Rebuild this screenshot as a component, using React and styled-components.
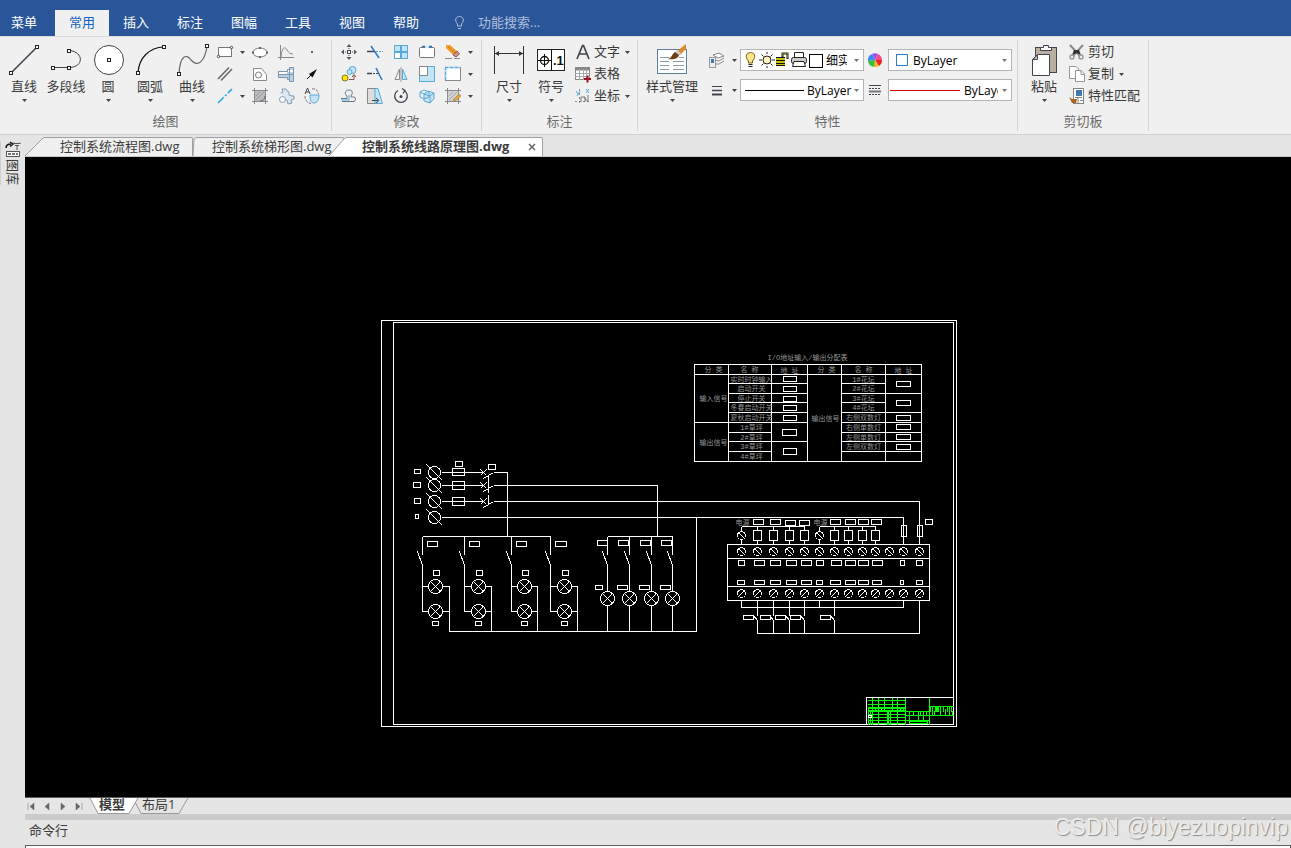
import React from "react";
import styled, { createGlobalStyle } from "styled-components";

const GlobalStyle = createGlobalStyle`
  * { box-sizing: border-box; }
  body {
    margin: 0;
    background: #e5e5e5;
    font-family: "Open Sans", "Noto Sans CJK SC", sans-serif;
    font-size: 13px;
    color: #3b3b3b;
  }
  button, input, select { font: inherit; color: inherit; }
`;

const Shell = styled.div`
  display: flex;
  flex-direction: column;
  height: 100vh;
  overflow: hidden;
  position: relative;
`;

const PlainButton = styled.button`
  border: 0;
  padding: 0;
  margin: 0;
  background: none;
  cursor: pointer;
`;

const Spacer = styled.span`
  flex: none;
  width: ${(p) => p.$w}px;
`;

/* ---------- menu ---------- */

const MenuBar = styled.nav`
  display: flex;
  align-items: flex-end;
  flex: none;
  height: 36px;
  background: #2a5699;
`;

const MenuTab = styled(PlainButton)`
  width: ${(p) => (p.$first ? 48 : 54)}px;
  margin-right: ${(p) => (p.$first ? 7 : 0)}px;
  height: 26px;
  line-height: 20px;
  padding-bottom: 3px;
  color: ${(p) => (p.$active ? "#0f62c4" : "#fff")};
  background: ${(p) => (p.$active ? "#f0f0f0" : "transparent")};
`;

const SearchBox = styled.label`
  display: flex;
  align-items: center;
  height: 26px;
  margin-left: 19px;
  padding-bottom: 3px;
  gap: 10px;
`;

const SearchInput = styled.input`
  width: 120px;
  height: 22px;
  padding: 0;
  border: 0;
  background: none;
  color: #fff;
  &::placeholder { color: #aebfdb; opacity: 1; }
`;

/* ---------- ribbon ---------- */

const Ribbon = styled.div`
  display: flex;
  flex: none;
  height: 99px;
  padding: 3px 0;
  background: #f0f0f0;
  border-top: 1px solid #dadada;
  border-bottom: 1px solid #d0d0d0;
`;

const Group = styled.section`
  display: flex;
  flex-direction: column;
  border-right: 1px solid #d4d4d4;
`;

const GroupBody = styled.div`
  display: flex;
  height: 71px;
  padding: 0 ${(p) => p.$right}px 0 ${(p) => p.$left}px;
`;

const GroupLabel = styled.div`
  text-align: center;
  line-height: 20px;
  color: #6a6a6a;
`;

const BigButton = styled(PlainButton)`
  display: flex;
  flex-direction: column;
  align-items: center;
  width: ${(p) => p.$width || 42}px;
  height: 68px;
  padding-top: 4px;
  line-height: 20px;
  white-space: nowrap;
`;

const BigArrow = styled.span`
  display: block;
  padding-top: 3px;
`;

const ToolColumns = styled.div`
  display: flex;
  padding-top: 1px;
`;

const ToolColumn = styled.div`
  display: flex;
  flex-direction: column;
  width: ${(p) => p.$width || 26}px;
`;

const Tool = styled(PlainButton)`
  display: flex;
  align-items: center;
  gap: 7px;
  height: 22px;
  white-space: nowrap;
`;

const LabelTool = styled(Tool)`
  gap: 3px;
  line-height: 20px;
  & > span { padding-bottom: 2px; }
  & > svg:last-child:not(:first-child) { margin-left: 2px; }
`;

const PropertyRows = styled.div`
  display: flex;
  flex-direction: column;
  gap: 8px;
  padding-top: 9px;
`;

const PropertyRow = styled.div`
  display: flex;
  align-items: center;
`;

const PropertyButton = styled(PlainButton)`
  display: flex;
  align-items: center;
  justify-content: space-between;
  width: ${(p) => p.$width}px;
  padding-right: ${(p) => p.$right}px;
`;

const Combo = styled.label`
  display: flex;
  align-items: center;
  width: 124px;
  height: 22px;
  padding: 0 4px;
  background: #fff;
  border: 1px solid #b4b4b4;
`;

const ComboSelect = styled.select`
  appearance: none;
  flex: 1;
  min-width: 0;
  height: 20px;
  margin-left: ${(p) => p.$gap}px;
  margin-right: ${(p) => p.$end || 0}px;
  padding: 0;
  border: 0;
  border-radius: 0;
  background: none;
  color: #000;
  font-size: 12px;
  text-overflow: clip;
`;

/* ---------- workspace ---------- */

const Workspace = styled.div`
  display: flex;
  flex: 1;
  min-height: 0;
`;

const SideBar = styled.aside`
  flex: none;
  width: 25px;
  padding-top: 6px;
  background: #e5e5e5;
`;

const LibraryTab = styled(PlainButton)`
  display: flex;
  flex-direction: column;
  align-items: center;
  width: 24px;
  height: 44px;
  border-left: 1px solid #cfcfcf;
`;

const VerticalText = styled.span`
  writing-mode: vertical-rl;
  text-orientation: sideways;
  line-height: 20px;
`;

const Main = styled.main`
  display: flex;
  flex-direction: column;
  flex: 1;
  min-width: 0;
`;

const DocTabs = styled.div`
  display: flex;
  align-items: flex-end;
  flex: none;
  height: 22px;
  border-bottom: 1px solid #c9c9c9;
`;

const DocTabBox = styled.div`
  display: flex;
  height: 19px;
  position: relative;
  margin-left: ${(p) => p.$overlap}px;
  font-weight: ${(p) => (p.$active ? 700 : 400)};
`;

const DocTabBody = styled.div`
  display: flex;
  align-items: center;
  width: ${(p) => p.$width}px;
  padding-left: 15px;
  border-top: 1px solid #a0a0a0;
  border-right: 1px solid #a0a0a0;
  border-top-right-radius: 2px;
  background: ${(p) => (p.$active ? "#fff" : "#f0f0f0")};
  white-space: nowrap;
`;

const DocTabTitle = styled(PlainButton)`
  font-weight: inherit;
  line-height: 16px;
  padding-bottom: 2px;
`;

const CloseButton = styled(PlainButton)`
  display: flex;
  margin: 0 6px 0 auto;
`;

const Canvas = styled.div`
  flex: 1;
  min-height: 0;
  background: #000;
  & > svg { display: block; width: 100%; height: 100%; }
`;

const SheetBar = styled.div`
  display: flex;
  flex: none;
  height: 17px;
  border-top: 1px solid #5a5a5a;
`;

const SheetNav = styled.div`
  display: flex;
  align-items: center;
  gap: 4px;
  width: 65px;
`;

const SheetNavButton = styled(PlainButton)`
  display: flex;
  justify-content: center;
  width: 12px;
`;

const SheetTab = styled(PlainButton)`
  display: flex;
  height: 16px;
  position: relative;
  z-index: ${(p) => (p.$active ? 1 : 0)};
  margin-left: ${(p) => (p.$active ? 0 : -5)}px;
  font-weight: ${(p) => (p.$active ? 700 : 400)};
`;

const SheetTabText = styled.span`
  padding: 0 3px 0 1px;
  line-height: 12px;
  height: 16px;
  border-bottom: 1px solid #9a9a9a;
  background: ${(p) => (p.$active ? "#fff" : "#e5e5e5")};
`;

const Splitter = styled.div`
  flex: none;
  height: 6px;
  background: #cbcbcb;
`;

const CommandPanel = styled.div`
  flex: none;
  height: 28px;
  overflow: hidden;
`;

const CommandLabel = styled.label`
  display: block;
  height: 25px;
  line-height: 20px;
  padding-left: 4px;
`;

const CommandInput = styled.input`
  display: block;
  width: 100%;
  height: 22px;
  border: 1px solid #5f5f5f;
  background: #fff;
`;

const Watermark = styled.div`
  position: absolute;
  right: 3px;
  bottom: 7px;
  font-family: "Liberation Sans", sans-serif;
  font-size: 23px;
  line-height: 28px;
  color: #ececec;
  text-shadow: 1px 1px 1px #8c8c8c;
  pointer-events: none;
`;

/* ---------- icons ---------- */

const Glyph = styled.svg`
  display: block;
  flex: none;
  width: ${(p) => p.$w}px;
  height: ${(p) => p.$h || p.$w}px;
  overflow: visible;
`;

const Icon = ({ w = 16, h = w, children, ...rest }) => (
  <Glyph $w={w} $h={h} viewBox={`0 0 ${w} ${h}`} fill="none" stroke="#40444e" aria-hidden="true" {...rest}>
    {children}
  </Glyph>
);

const Arrow = ({ color = "#444" }) => (
  <Icon w={5} h={3}><path d="M0 0H5L2.5 3Z" fill={color} stroke="none" /></Icon>
);

const Knob = ({ x, y }) => <rect x={x - 1.5} y={y - 1.5} width="3" height="3" fill="#fff" stroke="#222" />;

const big = {
  line: <Icon w={32}><path d="M3.5 28.5L29.5 2.5" strokeWidth="1.6" /><Knob x={3} y={29} /><Knob x={29} y={3} /></Icon>,
  polyline: <Icon w={32}><path d="M3.5 23.5H19.5C34 23 34 8 19.5 6.5" /><Knob x={3} y={24} /><Knob x={19} y={24} /><Knob x={19} y={7} /></Icon>,
  circle: <Icon w={32}><circle cx="17" cy="16" r="14.5" fill="#fff" /><Knob x={17} y={16} /></Icon>,
  arc: <Icon w={32}><path d="M4 28.5C5 14 15 3.5 30 3" stroke="#111" strokeWidth="1.2" /><Knob x={4} y={29} /><Knob x={30} y={3} /></Icon>,
  curve: <Icon w={32}><path d="M3 30C4 10 11 10 15 16C22 24 29 17 31 2" stroke="#666" strokeWidth="1.2" /><Knob x={3} y={30} /><Knob x={31} y={2} /></Icon>,
  dimension: <Icon w={32}><path d="M1.5 2V30M30.5 2V30M2 9.5H30" stroke="#333" /><path d="M2 9.5L6 7V12ZM30 9.5L26 7V12Z" fill="#333" stroke="none" /></Icon>,
  symbol: (
    <Icon w={32}>
      <rect x="2.5" y="5.500" width="27" height="21" fill="#fff" stroke="#222" />
      <path d="M16.5 5V27M3 16.5H16M9.5 10V23" stroke="#111" /><circle cx="9.5" cy="16.5" r="4" stroke="#111" strokeWidth="1.3" />
      <text x="18" y="21" fontSize="13" fontWeight="700" fontFamily="Liberation Sans, sans-serif" fill="#111" stroke="none">.1</text>
    </Icon>
  ),
  style: (
    <Icon w={32}>
      <rect x="1.5" y="5.5" width="29" height="24" fill="#fff" stroke="#5e7d9e" />
      <path d="M4 13.5H13M4 17.5H13M4 21.5H13M4 25.5H13M17 17.5H28M17 21.5H28M17 25.5H28M23 13.5H28" stroke="#8d99aa" />
      <path d="M30 0V5L24 11L20 8Z" fill="#d98a2b" stroke="none" />
      <path d="M22 6L25 10L22 12L18 9Z" fill="#c9ccd1" stroke="none" />
      <path d="M19 8L23 11C22 15 17 16 12 15C16 14 16 10 19 8Z" fill="#6d3f17" stroke="none" />
    </Icon>
  ),
  paste: (
    <Icon w={32}>
      <rect x="7.5" y="3.5" width="21" height="25" fill="#b8aea2" />
      <path d="M12.5 6.5V3.5H15.5V1.5H20.5V3.5H23.5V6.5Z" fill="#fff" />
      <path d="M9.5 10.5H21.5V31.5H4.5V15.5Z" fill="#fff" /><path d="M9.5 11V15.5H5Z" fill="#ccccdd" />
    </Icon>
  ),
};

const blue = "#5aa9d6";
const pale = "#c2e4f6";

const tool = {
  rect: <Icon><rect x="1.5" y="3.5" width="13" height="9" fill="#fff" stroke="#777" /><circle cx="1.5" cy="12.500" r="1.2" fill="#fff" /><circle cx="14.5" cy="3.500" r="1.2" fill="#fff" /></Icon>,
  parallel: <Icon><path d="M1 13L12 1.5M4 14.5L15 3" strokeWidth="1.500" stroke="#666" /></Icon>,
  centerline: <Icon><path d="M1 15L15 1" stroke="#1ba9e4" strokeWidth="1.500" strokeDasharray="8 2 2 2" /></Icon>,
  ellipse: <Icon><ellipse cx="8" cy="8.5" rx="7" ry="4.500" fill="#fff" stroke="#777" /><path d="M7 4H9M7 13H9M1 7.500V9.500M15 7.500V9.500" strokeWidth="2" stroke="#666" /></Icon>,
  profile: <Icon><path d="M1.5 2.500H9.500L14.500 8.500V14.500H1.500Z" fill="#fff" stroke="#888" /><circle cx="6.500" cy="9" r="3" stroke="#777" /></Icon>,
  hatch: <Icon><rect x="3" y="3" width="10" height="10" fill="#b9bcc0" stroke="none" /><path d="M0 2.500H16M0 13.500H16M2.500 0V16M13.500 0V16" stroke="#888" /><path d="M13 8C13 11 11 13 8 13" stroke="#666" /><path d="M4 8L8 4M4 12L12 4" stroke="#999" /></Icon>,
  formula: <Icon><path d="M2.500 1V16M0 13.500H16" stroke="#888" /><path d="M3 13C4 3 7 2 9 6C11 9 12 10 15 10" stroke="#888" /></Icon>,
  bolt: <Icon><path d="M.5 5.500H9.500V3.500H11.500V1.500H15.500V15.500H11.500V13.500H9.500V11.500H.500Z" fill="#b9d2e8" stroke="#7f93aa" /><path d="M1 7H9M10 5H15" stroke="#fff" strokeWidth="2" /><path d="M1 8.500H15M11.500 3V13" stroke="#7f93aa" /></Icon>,
  gear: <Icon><path d="M2.500 5L5 4L4 1H8L9 3L11 4L11 7L14 8H16V11L13 12L14 15L10 16L9 12L7 11" fill="#d9e8f4" stroke="#8799ad" /><circle cx="4.500" cy="11.500" r="3" fill="#fff" stroke="#8799ad" /></Icon>,
  dot: <Icon><rect x="7" y="7" width="2" height="2" fill="#5c6470" stroke="none" /></Icon>,
  leader: <Icon><path d="M3 13L8 8" stroke="#111" /><path d="M13 3L5 8L8.500 11.500Z" fill="#111" stroke="none" /></Icon>,
  rotateA: <Icon><path d="M6 7H15C15 12 13 15 10 15C7 15 6 12 6 7Z" fill={pale} stroke={blue} /><path d="M1 6L3.500 0L6 6M2 4H5" /><path d="M8 1C12 0 14 3 14.500 6M1 8C1 12 3 15 7 15.500" stroke="#777" strokeDasharray="3 1" /></Icon>,
  move: <Icon><rect x="6.500" y="6.500" width="3" height="3" fill="#fff" /><path d="M8 5V2M8 11V14M5 8H2M11 8H14" strokeDasharray="1 1" /><path d="M8 0L10.500 3H5.500ZM8 16L10.500 13H5.500ZM0 8L3 5.500V10.500ZM16 8L13 5.500V10.500Z" fill="#50545e" stroke="none" /></Icon>,
  trim: <Icon><path d="M0 7.500H8" strokeWidth="1.500" /><path d="M9 7.500H16" stroke={blue} strokeDasharray="2 1" /><path d="M4 2L12 14" stroke="#2a7ac0" strokeWidth="1.500" /></Icon>,
  extend: <Icon><path d="M0 7.500H5" strokeWidth="1.500" /><path d="M6 7.500H12" strokeDasharray="2 1" /><path d="M9 2L15 14" stroke="#2a7ac0" strokeWidth="1.500" /></Icon>,
  array: <Icon><rect x="1.500" y="1.500" width="13" height="13" fill={pale} stroke={blue} /><rect x="2" y="8" width="6" height="6" fill="#fff" stroke="none" /><path d="M8 1V15M1 8H15" stroke={blue} strokeWidth="2" /></Icon>,
  stretch: <Icon><rect x=".500" y="3.500" width="15" height="10" rx="1" fill="#fff" stroke="#777" /><path d="M5 3.500H11" stroke="#f0f0f0" strokeWidth="2" /><path d="M3 2.500H5.500V4M10.500 4V2.500H13" stroke="#2a7ac0" strokeWidth="1.500" /></Icon>,
  erase: <Icon><path d="M1 1L5 1L12 7L8 11L1 4Z" fill="#efa028" stroke="none" /><path d="M3 3L10 9" stroke="#c4781a" /><path d="M12 7L14.500 10L11 13L8 11Z" fill="#cf9389" stroke="#8d5950" /><path d="M0 14.500H7M9 14.500H15" stroke="#888" /></Icon>,
  copy: <Icon><circle cx="4" cy="12" r="3" fill="#ffe600" stroke="#80751d" /><circle cx="11.500" cy="4" r="3.500" fill={pale} stroke={blue} /><circle cx="8.500" cy="6" r="2.500" fill={pale} stroke={blue} /><path d="M8 13.500H13V9M11 11L13 8.500L15 11" stroke="#8a4e4e" /></Icon>,
  mirror: <Icon><path d="M6.500 3V13.500H2Z" stroke="#888" fill="#f6f6f6" /><path d="M9.500 3V13.500H14Z" fill={pale} stroke={blue} /><path d="M8 1V16" stroke="#999" /></Icon>,
  scale: <Icon><rect x=".500" y=".500" width="15" height="15" fill={pale} stroke={blue} /><rect x=".500" y=".500" width="8" height="9" fill="#fff" stroke="#888" /></Icon>,
  boundary: <Icon><rect x=".500" y="1.500" width="15" height="13" fill="#fff" stroke="#888" /><path d="M0 1.500H15M.500 1V14" stroke="#a8d6f2" strokeWidth="2" /><path d="M0 1.500H15M.500 1V14" stroke={blue} strokeDasharray="3 2" /></Icon>,
  offset: <Icon><path d="M0 10.500H6V8C3 6 4 2 8 2S12 5 10 8V9H13C15 9 15 13 13 13.500H1" stroke="#6b7684" /><path d="M0 12H8V7" stroke={blue} /></Icon>,
  taper: <Icon><path d="M.500.500H9V15.500H.500Z" fill="#ddd" stroke="#888" /><path d="M8 .500H11L15.500 15.500H8Z" fill={pale} stroke={blue} /><path d="M5 12.500H11M9 10L12 12.500L9 15" /></Icon>,
  rotate: <Icon><path d="M5 2.500A6.300 6.300 0 1 0 11 2.500" strokeWidth="1.300" /><path d="M9 .500L12 2.500L10 5.500" strokeWidth="1.300" /><circle cx="8" cy="8.500" r="1.500" fill="#40444e" stroke="none" /></Icon>,
  block: <Icon><path d="M5 6L9 3L15 5V11L11 15L5 13Z" fill={pale} stroke={blue} /><path d="M5 6L11 8L15 5M11 8V15M1 4L5 2L10 4V9L5 11L1 9ZM1 4L5 6" stroke={blue} /></Icon>,
  editHatch: <Icon><rect x="2" y="2" width="12" height="12" fill="#cfd0d2" stroke="none" /><path d="M0 2.500H16M0 13.500H16M2.500 0V16M13.500 0V16" stroke="#888" /><path d="M4 8L8 4M4 12L12 4" stroke="#aaa" /><path d="M8 12L14 6L16 8L10 13Z" fill="#e9aa3d" stroke="#9a661b" strokeWidth=".500" /></Icon>,
  text: <Icon w={16}><path d="M2 15L7.500 1.500H8.500L14 15M4.500 10H11.500" strokeWidth="1.700" /></Icon>,
  table: <Icon><rect x=".500" y="1.500" width="14" height="12" fill="#fff" stroke="#888" /><path d="M0 3H15" stroke="#888" strokeWidth="3" /><path d="M0 7.500H15M0 10.500H15M4.500 3V14M8.500 3V14M11.500 3V14" stroke="#aaa" /><path d="M9 13H16M12.500 9.500V16.500" stroke="#a40f1c" strokeWidth="2" /></Icon>,
  coord: <Icon><path d="M4.500 1V16M0 13.500H16" stroke="#888" strokeDasharray="2 2" /><path d="M6 14V9H10V14M9 9L13 14V7" stroke="#777" /><path d="M1 3L3 6M5 3L2 8M11 1L14 5M14 1L11 5" stroke={blue} /></Icon>,
  cut: <Icon><path d="M1 1L11 12M14 1L4 12" strokeWidth="2" stroke="#888" /><path d="M5 6H10L12 11L8 9L3 11Z" fill="#333" stroke="none" /><circle cx="3" cy="13" r="2" stroke="#999" strokeWidth="1.500" /><circle cx="12" cy="13" r="2" stroke="#999" strokeWidth="1.500" /></Icon>,
  duplicate: <Icon><path d="M.500.500H7L9.500 3V12.500H.500Z" fill="#fff" stroke="#959595" /><path d="M6.500 4.500H12L15.500 8V15.500H6.500Z" fill="#fff" stroke="#959595" /><path d="M12 4.500V8.500H15" stroke="#959595" /></Icon>,
  match: <Icon><rect x="4.500" y=".500" width="10" height="15" fill="#fff" stroke="#858585" /><rect x="7" y="2" width="6" height="6" fill="#3e78b5" stroke="none" /><path d="M6 9.500H13M9 9V15M11 12.500H14" stroke="#858585" /><path d="M0 9L3 11L8 11L7 15L3 15Z" fill="#ab6421" stroke="none" /></Icon>,
  layers: <Icon><path d="M4 3L10 1L15 4L9 6ZM6 8L10 9L15 6M7 12L10 12L15 9" stroke="#888" fill="#fff" /><rect x=".500" y="5.500" width="6" height="10" fill="#eee" stroke="#999" /><rect x="2" y="7" width="3" height="4" fill="#3e78b5" stroke="none" /></Icon>,
  widths: <Icon><path d="M3 4.500H13" /><path d="M3 8.500H13" strokeWidth="1.500" /><path d="M3 12.500H13" strokeWidth="2" /></Icon>,
  linetype: <Icon w={14} h={12}><path d="M1 1.500H13" /><path d="M1 4.500H13M1 10.500H13" strokeDasharray="2 1" /><path d="M1 7.500H13" stroke="#777" strokeWidth="2" /></Icon>,
};

const ColorWheel = () => (
  <Icon w={14} stroke="none">
    <path d="M7 7L4 1A7 7 0 0 1 10 1Z" fill="#a64bea" /><path d="M7 7L10 1A7 7 0 0 1 14 7Z" fill="#f04a8a" />
    <path d="M7 7H14A7 7 0 0 1 11 13Z" fill="#f02222" /><path d="M7 7L11 13A7 7 0 0 1 6 14Z" fill="#f5b51c" />
    <path d="M7 7L6 14A7 7 0 0 1 0 8Z" fill="#38c136" /><path d="M7 7L0 8A7 7 0 0 1 4 1Z" fill="#3a8bf0" />
  </Icon>
);

const LayerState = () => (
  <Icon w={78} h={18} stroke="#222">
    <path d="M3.500 12V10C-1 5 2 1.500 5.500 1.500S12 5 7.500 10V12Z" fill="#ffe58a" stroke="#77601a" /><path d="M3.500 13.500H7.500M3.500 15.500H7.500" />
    <circle cx="22" cy="9" r="4" fill="#fff3bf" /><path d="M22 1V3M22 15V17M14 9H17M27 9H30M16.500 3.500L18.500 5.500M27.500 3.500L25.500 5.500M16.500 14.500L18.500 12.500M27.500 14.500L25.500 12.500" />
    <rect x="31" y="6" width="9" height="9" fill="#c4c000" stroke="none" /><path d="M31 6.500H40M31 9.500H40M31 12.500H40M31 14.500H40" stroke="#111" />
    <path d="M37.500 6V2.500H42.500V8" stroke="#222" strokeWidth="2" /><path d="M37.500 5V2.500H42.500V7" stroke="#c4c000" strokeWidth=".500" />
    <path d="M49.500 7V1.500H58.500V7" fill="#fff" /><rect x="46.500" y="6.500" width="15" height="6" rx="2" fill="#ccc" /><path d="M49 10.500H59L60.500 15.500H47.500Z" fill="#fff" />
    <rect x="64.500" y="3.500" width="13" height="13" fill="#fff" stroke="#000" />
  </Icon>
);

/* ---------- electrical drawing ---------- */

const Lines = ({ d }) => <path d={d} />;
const Box = ({ b: [x, y, w, h] }) => <rect x={x} y={y} width={w} height={h} />;

const Lamp = ({ x, y }) => (
  <g>
    <circle cx={x} cy={y} r="7" />
    <path d={`M${x - 5} ${y - 5}l10 10m0 -10l-10 10`} />
  </g>
);

const Terminal = ({ x, y, up }) => (
  <g>
    <circle cx={x} cy={y} r="4" />
    <path d={up ? `M${x - 3} ${y + 3}l6 -6` : `M${x - 3} ${y - 3}l6 6`} />
  </g>
);

const rowsY = [374, 383, 393, 402, 412, 422, 432, 441, 451];
const inputNames = ["实时时钟输入", "启动开关", "停止开关", "冬春启动开关", "夏秋启动开关", "1#草坪", "2#草坪", "3#草坪", "4#草坪"];
const outputNames = ["1#花坛", "2#花坛", "3#花坛", "4#花坛", "右侧双数灯", "右侧单数灯", "左侧单数灯", "左侧双数灯"];

const tableBoxes = [
  [783, 376, 13, 5], [783, 386, 13, 5], [783, 396, 13, 5], [783, 405, 13, 5], [783, 415, 13, 5], [782, 429, 14, 6], [783, 448, 13, 6],
  [896, 381, 14, 5], [896, 400, 14, 5], [896, 415, 14, 5], [896, 424, 14, 5], [896, 434, 14, 5], [896, 444, 14, 5],
];

const AddressTable = () => (
  <g>
    <Lines d="M694 364H921V461H694ZM728 364V461M771 364V461M807 364V461M841 364V461M885 364V461M694 374H921M694 422H807M728 383H807M728 393H807M728 402H807M728 412H807M728 432H771M728 441H807M728 451H771M841 383H885M841 393H921M841 402H885M841 412H921M841 422H921M841 432H921M841 441H921M841 451H921" />
    {tableBoxes.map((b) => <Box key={b.join()} b={b} />)}
    <g fill="#969696" stroke="none" fontSize="7" fontFamily="'Liberation Mono', 'Noto Sans CJK SC', monospace" textAnchor="middle">
      <text x="807" y="359">I/O地址输入/输出分配表</text>
      <text x="713" y="371">分 类</text><text x="749" y="371">名 称</text><text x="789" y="372">地 址</text>
      <text x="826" y="371">分 类</text><text x="863" y="371">名 称</text><text x="903" y="372">地 址</text>
      <text x="713" y="400">输入信号</text><text x="713" y="444">输出信号</text><text x="825" y="420">输出信号</text>
      {inputNames.map((t, i) => <text key={t} x="751" y={rowsY[i] + 7}>{t}</text>)}
      {outputNames.map((t, i) => <text key={t} x="863" y={rowsY[i] + 7}>{t}</text>)}
    </g>
  </g>
);

const feederY = [472, 485, 501, 517];
const feederBoxes = [
  [414, 469, 6, 4], [413, 482, 7, 5], [414, 498, 6, 5], [415, 514, 3, 4],
  [452, 468, 12, 7], [452, 481, 12, 8], [452, 497, 12, 8], [455, 461, 7, 5], [488, 464, 7, 5],
];

const Feeders = () => (
  <g>
    {feederBoxes.map((b) => <Box key={b.join()} b={b} />)}
    {feederY.map((y) => (
      <g key={y}><circle cx="434" cy={y} r="6" /><path d={`M426 ${y - 8}l16 16`} /></g>
    ))}
    {feederY.slice(0, 3).map((y) => (
      <path key={y} d={`M441 ${y}H483M480 ${y - 3}l6 6m0 -6l-6 6M483 ${y + 6}L493 ${y}`} />
    ))}
    <Lines d="M488 475V492M488 494V504M493 472H507V536M493 485H657V536M493 501H919V544M441 517H903V544M696 517V631H449M422 536H550M607 536H672" />
  </g>
);

const pairs = [[422, 435, 449, 427, 10], [464, 478, 491, 469, 10], [511, 524, 537, 516, 10], [550, 564, 577, 555, 11]];
const singles = [[607, 597, 595, 7], [629, 618, 617, 10], [651, 640, 639, 10], [672, 661, 660, 10]];

const LampCircuits = () => (
  <g>
    {pairs.map(([x, cx, rx, bx, bw]) => (
      <g key={x}>
        <path d={`M${x} 536V554M${x - 5} 551L${x} 565V611H${cx - 7}M${x} 586H${cx - 7}M${cx + 7} 586H${rx}V631M${cx + 7} 611H${rx}`} />
        <Lamp x={cx} y={586} /><Lamp x={cx} y={611} />
        <Box b={[bx, 541, bw, 5]} /><Box b={[cx - 2, 570, 6, 5]} /><Box b={[cx - 3, 621, 6, 4]} />
      </g>
    ))}
    {singles.map(([x, bx, lx, lw]) => (
      <g key={x}>
        <path d={`M${x} 536V554M${x - 5} 551L${x} 565V591M${x} 605V631`} />
        <Lamp x={x} y={598} />
        <Box b={[bx, 540, 10, 5]} /><Box b={[lx, 585, lw, 4]} />
      </g>
    ))}
  </g>
);

const terminalX = [741, 757, 773, 789, 804, 819, 834, 848, 862, 875, 889, 903, 919];
const coilX = [757, 773, 789, 804, 834, 848, 862, 875];
const switchX = [757, 773, 789, 804, 834];
const plcBoxes = [
  ...[[738, 6], [754, 10], [770, 10], [786, 10], [801, 10], [816, 7], [831, 10], [845, 10], [858, 10], [872, 10], [900, 4], [916, 6]].map(([x, w]) => [x, 560, w, 5]),
  ...[[737, 7], [754, 10], [770, 10], [786, 10], [801, 10], [816, 6], [830, 10], [845, 10], [858, 10], [872, 9], [900, 3], [916, 6]].map(([x, w]) => [x, 580, w, 4]),
  ...[[753, 519], [770, 519], [785, 520], [799, 520], [830, 519], [845, 519], [858, 519], [871, 519]].map(([x, y]) => [x, y, 10, 5]),
  ...[743, 760, 775, 790, 820].map((x) => [x, 615, 10, 4]),
  [901, 525, 5, 11], [917, 525, 5, 11], [925, 519, 7, 5],
];

const Controller = () => (
  <g>
    <Lines d="M727 544H929V600H727ZM727 558H929M727 586H929M741 526H804M819 526H875M741 526V531M741 539V544M819 526V531M819 539V544M741 600V607H903V600M819 600V607M757 633H919V600" />
    {terminalX.map((x) => <g key={x}><Terminal x={x} y={551} /><Terminal x={x} y={593} up /></g>)}
    {coilX.map((x) => <g key={x}><Box b={[x - 4, 530, 8, 10]} /><path d={`M${x} 526V530M${x} 540V544`} /></g>)}
    {[741, 819].map((x) => <Terminal key={x} x={x} y={535} />)}
    {switchX.map((x) => <path key={x} d={`M${x} 600V615M${x - 4} 615L${x} 620V633`} />)}
    {plcBoxes.map((b) => <Box key={b.join()} b={b} />)}
    <g fill="#969696" stroke="none" fontSize="7" fontFamily="'Noto Sans CJK SC', sans-serif">
      <text x="735" y="524">电源</text><text x="813" y="524">电源</text>
    </g>
  </g>
);

const TitleBlock = () => (
  <g>
    <g stroke="#00ff00">
      <Lines d="M867 700H905M867 704H905M867 707H905M867 708H905M867 711H929M867 710H905M867 714H905M867 717H905M867 720H905M867 723H905" />
      <Lines d="M872 697V724M878 697V724M884 697V711M892 697V711M897 697V711M905 697V724M868 707V724M870 711V724M875 707V711M881 707V711M888 711V724M887 711V724M890 711V724M900 707V711M903 707V711M897 711V724" />
      <Lines d="M905 715H929M905 720H929M909 711V720M913 711V715M918 711V720M920 711V715M923 711V720M926 711V715M929 697V724" />
      <Lines d="M929 706H953M929 715H953M930 706V711M932 706V715M935 706V711M936 706V711M937 706V711M938 706V711M934 710V715M940 706V715M943 706V711M945 708V715M947 706V711M949 706V715M951 706V711M952 710V715" />
      <rect x="909" y="721" width="18" height="2" />
    </g>
    <Lines d="M866 724V697H953" /><Box b={[868, 715, 3, 2]} />
  </g>
);

const Drawing = () => (
  <svg viewBox="25 157 1266 640" role="img" aria-label="控制系统线路原理图">
    <g transform="translate(.5 .5)" fill="none" stroke="#fff" shapeRendering="crispEdges">
      <Lines d="M381 320H956V726H381ZM393 322H953V724H393Z" />
      <AddressTable />
      <Feeders />
      <LampCircuits />
      <Controller />
      <TitleBlock />
    </g>
  </svg>
);

/* ---------- page parts ---------- */

const BigTool = ({ icon, label, arrow = true, width }) => (
  <BigButton $width={width}>
    {big[icon]}
    <span>{label}</span>
    {arrow && <BigArrow><Arrow /></BigArrow>}
  </BigButton>
);

const Column = ({ names, arrows = [], width }) => (
  <ToolColumn $width={width}>
    {names.map((n, i) => <Tool key={n} aria-label={n}>{tool[n]}{arrows[i] ? <Arrow /> : null}</Tool>)}
  </ToolColumn>
);

const TextTool = ({ icon, label, arrow }) => (
  <LabelTool>{tool[icon]}<span>{label}</span>{arrow && <Arrow />}</LabelTool>
);

const DocTab = ({ title, active, slant, width, overlap }) => (
  <DocTabBox $active={active} $overlap={overlap}>
    <Icon w={slant} h={19} preserveAspectRatio="none">
      <path d={`M0 19L${slant - 3} 2Q${slant - 2} .5 ${slant} .5V19Z`} fill={active ? "#fff" : "#f0f0f0"} stroke="none" />
      <path d={`M0 19L${slant - 3} 2Q${slant - 2} .5 ${slant} .5`} stroke="#a0a0a0" />
    </Icon>
    <DocTabBody $active={active} $width={width}>
      <DocTabTitle>{title}</DocTabTitle>
      {active && (
        <CloseButton aria-label="关闭">
          <Icon w={8}><path d="M1 1L7 7M7 1L1 7" stroke="#666" strokeWidth="1.5" /></Icon>
        </CloseButton>
      )}
    </DocTabBody>
  </DocTabBox>
);

const Sheet = ({ label, active }) => {
  const fill = active ? "#fff" : "#e5e5e5";
  return (
    <SheetTab $active={active}>
      <Icon w={8} h={16}><path d="M0 0L8 15.5V0Z" fill={fill} stroke="none" /><path d="M0 0L8 15.5" stroke="#9a9a9a" /></Icon>
      <SheetTabText $active={active}>{label}</SheetTabText>
      <Icon w={10} h={16}><path d="M0 0V15.5H1L10 0Z" fill={fill} stroke="none" /><path d="M0 15.5H1L10 0" stroke="#9a9a9a" /></Icon>
    </SheetTab>
  );
};

const navShapes = [["首页", "M1 0V7M7 0L3 3.5L7 7Z"], ["上一页", "M6 0L2 3.5L6 7Z"], ["下一页", "M2 0L6 3.5L2 7Z"], ["末页", "M1 0L5 3.5L1 7ZM7 0V7"]];
const menus = ["菜单", "常用", "插入", "标注", "图幅", "工具", "视图", "帮助"];

export default function App() {
  return (
    <Shell>
      <GlobalStyle />
      <MenuBar>
        {menus.map((m, i) => <MenuTab key={m} $first={i === 0} $active={i === 1}>{m}</MenuTab>)}
        <SearchBox>
          <Icon w={16} stroke="#aebfdb"><path d="M5.500 12V10C2 6 4 2.500 7.500 2.500S13 6 9.500 10V12ZM6 14.500H9" /></Icon>
          <SearchInput placeholder="功能搜索..." aria-label="功能搜索" />
        </SearchBox>
      </MenuBar>

      <Ribbon>
        <Group>
          <GroupBody $left={3} $right={1}>
            <BigTool icon="line" label="直线" />
            <BigTool icon="polyline" label="多段线" arrow={false} />
            <BigTool icon="circle" label="圆" />
            <BigTool icon="arc" label="圆弧" />
            <BigTool icon="curve" label="曲线" />
            <Spacer $w={4} />
            <ToolColumns>
              <Column width={35} names={["rect", "parallel", "centerline"]} arrows={[true, false, true]} />
              <Column names={["ellipse", "profile", "hatch"]} />
              <Column names={["formula", "bolt", "gear"]} />
              <Column names={["dot", "leader", "rotateA"]} />
            </ToolColumns>
          </GroupBody>
          <GroupLabel>绘图</GroupLabel>
        </Group>

        <Group>
          <GroupBody $left={9} $right={4}>
            <ToolColumns>
              <Column names={["move", "copy", "offset"]} />
              <Column names={["trim", "extend", "taper"]} />
              <Column names={["array", "mirror", "rotate"]} />
              <Column names={["stretch", "scale", "block"]} />
              <Column width={32} names={["erase", "boundary", "editHatch"]} arrows={[true, true, true]} />
            </ToolColumns>
          </GroupBody>
          <GroupLabel>修改</GroupLabel>
        </Group>

        <Group>
          <GroupBody $left={6} $right={7}>
            <BigTool icon="dimension" label="尺寸" />
            <BigTool icon="symbol" label="符号" />
            <Spacer $w={3} />
            <ToolColumns>
              <ToolColumn $width={55}>
                <TextTool icon="text" label="文字" arrow />
                <TextTool icon="table" label="表格" />
                <TextTool icon="coord" label="坐标" arrow />
              </ToolColumn>
            </ToolColumns>
          </GroupBody>
          <GroupLabel>标注</GroupLabel>
        </Group>

        <Group>
          <GroupBody $left={4} $right={5}>
            <BigTool icon="style" label="样式管理" width={60} />
            <Spacer $w={7} />
            <PropertyRows>
              <PropertyRow>
                <PropertyButton $width={31} $right={3} aria-label="图层">{tool.layers}<Arrow /></PropertyButton>
                <Combo>
                  <LayerState />
                  <ComboSelect $gap={3} $end={7} aria-label="当前图层"><option>细实线层</option></ComboSelect>
                  <Arrow color="#777" />
                </Combo>
                <PropertyButton $width={24} $right={6} aria-label="颜色"><Spacer $w={4} /><ColorWheel /></PropertyButton>
                <Combo>
                  <Icon w={18}><rect x="3.5" y="3.5" width="11" height="11" stroke="#2a7fd0" fill="#fff" /></Icon>
                  <ComboSelect $gap={2} aria-label="颜色设置"><option>ByLayer</option></ComboSelect>
                  <Arrow color="#777" />
                </Combo>
              </PropertyRow>
              <PropertyRow>
                <PropertyButton $width={31} $right={3} aria-label="线宽">{tool.widths}<Arrow /></PropertyButton>
                <Combo>
                  <Icon w={59} h={1}><path d="M0 .5H59" stroke="#000" /></Icon>
                  <ComboSelect $gap={3} aria-label="线宽设置"><option>ByLayer</option></ComboSelect>
                  <Arrow color="#777" />
                </Combo>
                <PropertyButton $width={24} $right={6} aria-label="线型"><Spacer $w={4} />{tool.linetype}</PropertyButton>
                <Combo>
                  <Icon w={67} h={1}><path d="M-3 .5H67" stroke="#e00000" /></Icon>
                  <ComboSelect $gap={4} $end={4} aria-label="线型设置"><option>ByLayer</option></ComboSelect>
                  <Arrow color="#777" />
                </Combo>
              </PropertyRow>
            </PropertyRows>
          </GroupBody>
          <GroupLabel>特性</GroupLabel>
        </Group>

        <Group>
          <GroupBody $left={5} $right={5}>
            <BigTool icon="paste" label="粘贴" />
            <Spacer $w={4} />
            <ToolColumns>
              <ToolColumn $width={74}>
                <TextTool icon="cut" label="剪切" />
                <TextTool icon="duplicate" label="复制" arrow />
                <TextTool icon="match" label="特性匹配" />
              </ToolColumn>
            </ToolColumns>
          </GroupBody>
          <GroupLabel>剪切板</GroupLabel>
        </Group>
      </Ribbon>

      <Workspace>
        <SideBar>
          <LibraryTab>
            <Icon w={16} h={18}>
              <path d="M1 7C1 4 3 3 6 3M5 1L8 3L5 5.5" stroke="#111" strokeWidth="1.5" />
              <path d="M9 2.5H15M10 4.5H14M12 4V9M9 1.5V3M15 1.5V3" stroke="#555" />
              <rect x="1.5" y="10.5" width="13" height="5" fill="#fff" stroke="#555" /><path d="M3 13H13" stroke="#777" strokeDasharray="3 1" strokeWidth="2" />
            </Icon>
            <VerticalText>图库</VerticalText>
          </LibraryTab>
        </SideBar>
        <Main>
          <DocTabs>
            <DocTab title="控制系统流程图.dwg" slant={20} width={148} overlap={0} />
            <DocTab title="控制系统梯形图.dwg" slant={4} width={147} overlap={0} />
            <DocTab title="控制系统线路原理图.dwg" slant={18} width={196} overlap={-15} active />
          </DocTabs>
          <Canvas><Drawing /></Canvas>
          <SheetBar>
            <SheetNav>
              {navShapes.map(([name, d]) => (
                <SheetNavButton key={name} aria-label={name}>
                  <Icon w={8} h={7} stroke="#666"><path d={d} fill="#666" strokeWidth=".5" /></Icon>
                </SheetNavButton>
              ))}
            </SheetNav>
            <Sheet label="模型" active />
            <Sheet label="布局1" />
          </SheetBar>
          <Splitter />
          <CommandPanel>
            <CommandLabel htmlFor="command">命令行</CommandLabel>
            <CommandInput id="command" />
          </CommandPanel>
        </Main>
      </Workspace>
      <Watermark>CSDN @biyezuopinvip</Watermark>
    </Shell>
  );
}
